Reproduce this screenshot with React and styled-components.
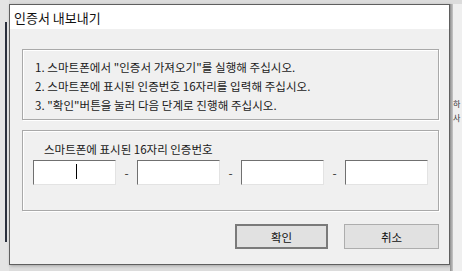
import React from "react";
import styled, { createGlobalStyle } from "styled-components";

const Global = createGlobalStyle`
  html, body {
    margin: 0;
    padding: 0;
    background: #d9d9d9;
    overflow: hidden;
  }
  * { box-sizing: border-box; }
`;

const Desktop = styled.div`
  width: 462px;
  height: 271px;
  display: flex;
  background: #dcdcdc;
`;

const LeftEdge = styled.div`
  flex: 0 0 9px;
  display: flex;
  justify-content: flex-end;
  padding-top: 22px;
  padding-right: 2px;
  background: #e4e4e4;
`;

const DarkLine = styled.div`
  width: 2px;
  height: 220px;
  background: #2a2f3c;
`;

const Middle = styled.div`
  flex: 0 0 auto;
  display: flex;
  flex-direction: column;
  padding-top: 4px;
`;

const Window = styled.div`
  width: 441px;
  height: 261px;
  border: 1px solid #5f5f5f;
  background: #f0f0f0;
  display: flex;
  flex-direction: column;
  box-shadow: 1px 1px 3px rgba(0, 0, 0, 0.25);
  font-family: "Noto Sans CJK KR", "Noto Sans", sans-serif;
  color: #1a1a1a;
`;

const TitleBar = styled.div`
  height: 24px;
  background: #ffffff;
  display: flex;
  align-items: center;
  padding-left: 4px;
  font-size: 13px;
  color: #111;
`;

const Body = styled.div`
  flex: 1;
  display: flex;
  flex-direction: column;
  padding: 20px 10px 0 12px;
`;

const Group = styled.div`
  border: 1px solid #a9a9a9;
  box-shadow: inset 1px 1px 0 #ffffff, 1px 1px 0 #ffffff;
  height: ${(p) => p.$h}px;
  margin-bottom: ${(p) => p.$mb || 0}px;
`;

const Steps = styled.ol`
  margin: 0;
  padding: 8px 0 0 12px;
  list-style: none;
  display: flex;
  flex-direction: column;
  gap: 1px;
`;

const Step = styled.li`
  font-size: 11.5px;
  line-height: 18px;
  letter-spacing: 0.05px;
`;

const CodeBox = styled.div`
  padding: 10px 0 0 10px;
  display: flex;
  flex-direction: column;
`;

const Label = styled.div`
  font-size: 11.5px;
  line-height: 16px;
  padding-left: 11px;
  margin-bottom: 3px;
`;

const InputRow = styled.div`
  display: flex;
  align-items: center;
`;

const Field = styled.div`
  position: relative;
  width: 83px;
  height: 25px;
  background: #ffffff;
  border-top: 1px solid #707070;
  border-left: 1px solid #707070;
  border-right: 1px solid #e3e3e3;
  border-bottom: 1px solid #e3e3e3;
`;

const Caret = styled.div`
  position: absolute;
  left: 42px;
  top: 3px;
  width: 1px;
  height: 15px;
  background: #000;
`;

const Dash = styled.div`
  width: 21px;
  text-align: center;
  font-size: 12px;
  color: #333;
`;

const Buttons = styled.div`
  display: flex;
  justify-content: flex-end;
  gap: 16px;
  padding-top: 13px;
`;

const Button = styled.button`
  width: ${(p) => p.$w}px;
  height: 25px;
  background: #e1e1e1;
  border: ${(p) => (p.$default ? "2px solid #7a7a7a" : "1px solid #adadad")};
  font-family: "Noto Sans CJK KR", "Noto Sans", sans-serif;
  font-size: 11.5px;
  color: #111;
  padding: 0;
`;

const RightEdge = styled.div`
  flex: 1 1 0;
  min-width: 0;
  display: flex;
  padding-top: 4px;
`;

const ScrollStrip = styled.div`
  flex: 0 0 3px;
  background: linear-gradient(90deg, #8e8e8e, #c8c8c8);
`;

const Peek = styled.div`
  flex: 1;
  min-width: 0;
  background: #efefef;
  font-family: "Noto Sans CJK KR", sans-serif;
  font-size: 8px;
  color: #333;
  padding-top: 93px;
  line-height: 14px;
  white-space: nowrap;
`;

export default function App() {
  return (
    <>
      <Global />
      <Desktop>
        <LeftEdge>
          <DarkLine />
        </LeftEdge>
        <Middle>
          <Window>
            <TitleBar>인증서 내보내기</TitleBar>
            <Body>
              <Group $h={71} $mb={10}>
                <Steps>
                  <Step>1. 스마트폰에서 "인증서 가져오기"를 실행해 주십시오.</Step>
                  <Step>2. 스마트폰에 표시된 인증번호 16자리를 입력해 주십시오.</Step>
                  <Step>3. "확인"버튼을 눌러 다음 단계로 진행해 주십시오.</Step>
                </Steps>
              </Group>
              <Group $h={81}>
                <CodeBox>
                  <Label>스마트폰에 표시된 16자리 인증번호</Label>
                  <InputRow>
                    <Field>
                      <Caret />
                    </Field>
                    <Dash>-</Dash>
                    <Field />
                    <Dash>-</Dash>
                    <Field />
                    <Dash>-</Dash>
                    <Field />
                  </InputRow>
                </CodeBox>
              </Group>
              <Buttons>
                <Button $w={93} $default>확인</Button>
                <Button $w={95}>취소</Button>
              </Buttons>
            </Body>
          </Window>
        </Middle>
        <RightEdge>
          <ScrollStrip />
          <Peek>
            하<br />사
          </Peek>
        </RightEdge>
      </Desktop>
    </>
  );
}
